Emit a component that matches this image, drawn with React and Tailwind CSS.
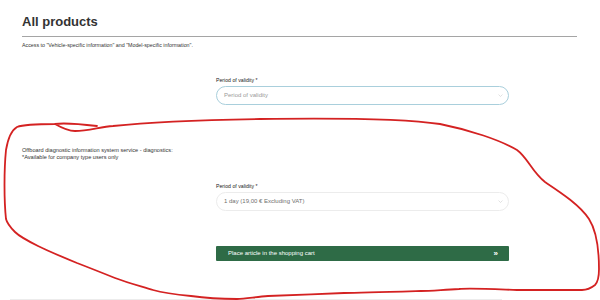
import React from 'react';

const font = { fontFamily: '"Liberation Sans", Arial, sans-serif' };

const Chevron = ({ className }) => (
  <svg viewBox="0 0 10 6" className={className} fill="none" stroke="currentColor" strokeWidth="1">
    <path d="M1 1 L5 5 L9 1" />
  </svg>
);

const Field = ({ label, value, placeholder, active }) => (
  <div className="flex flex-col">
    <label className="text-[5.2px] leading-[6px] text-[#222]">{label}</label>
    <div
      className={`mt-[3px] h-[19px] rounded-full border bg-white flex items-center justify-between pl-[7px] pr-[5px] ${
        active ? 'border-[#a9cfdc]' : 'border-[#ececec]'
      }`}
    >
      <span className={`text-[6px] ${placeholder ? 'text-[#9a9a9a]' : 'text-[#6f6f6f]'}`}>{value}</span>
      <Chevron className="w-[5px] h-[3px] text-[#c4c4c4]" />
    </div>
  </div>
);

export default function App() {
  return (
    <div className="relative w-[600px] h-[300px] bg-white overflow-hidden" style={font}>
      <div className="pl-[22px] pr-[23px] pt-[15px]">
        {/* Header */}
        <h1 className="text-[13px] leading-none font-bold text-[#333]">All products</h1>
        <div className="mt-[8px] h-px bg-[#a5a5a5]" />
        <p className="mt-[5px] text-[5.3px] leading-[6px] text-[#333]">
          Access to "Vehicle-specific information" and "Model-specific information".
        </p>

        {/* First product */}
        <div className="ml-[194px] w-[293px] mt-[29px]">
          <Field label="Period of validity *" value="Period of validity" placeholder active />
        </div>

        {/* Second product */}
        <div className="mt-[42px] text-[5.6px] leading-[6.5px] text-[#333]">
          <p>Offboard diagnostic information system service - diagnostics:</p>
          <p>*Available for company type users only</p>
        </div>

        <div className="ml-[194px] w-[293px] mt-[23px]">
          <Field label="Period of validity *" value="1 day (19,00 € Excluding VAT)" />
          <button className="mt-[35px] w-full h-[15px] bg-[#2e6b46] rounded-[1px] flex items-center justify-between pl-[12px] pr-[11px] text-white text-[6px]">
            <span>Place article in the shopping cart</span>
            <span className="text-[8px] leading-none font-bold">»</span>
          </button>
        </div>
      </div>

      {/* Footer rule */}
      <div className="absolute left-[10px] w-[492px] top-[299px] h-px bg-[#ececec]" />

      {/* Red hand-drawn annotation */}
      <svg className="absolute inset-0 pointer-events-none" width="600" height="300" viewBox="0 0 600 300" fill="none">
        <path
          d="M97 126 C80 124 62 123 55 124 C62 128 68 131 75 131 C88 131 100 127 113 126 C150 122 200 120 260 119 C330 118 400 118 440 124 C470 130 500 140 517 150 C528 158 532 172 545 182 C560 192 580 205 589 219 C596 230 599 250 599 269 C599 278 598 282 595 285 C590 289 586 290 582 290 C560 290 540 290 517 290 C490 289 470 288 459 289 C440 290 430 291 421 291 C390 292 360 293 344 293 C320 294 290 295 268 296 C255 297 245 299 237 299 C220 299 205 298 191 296 C170 294 160 292 153 290 C140 286 128 283 115 278 C100 272 90 268 77 263 C60 256 48 251 38 246 C28 241 20 237 15 232 C10 227 7 223 6 219 C4 200 4 170 6 150 C8 138 12 130 17 127 C22 125 35 124 55 124"
          stroke="#d42222"
          strokeWidth="1.8"
          strokeLinecap="round"
          strokeLinejoin="round"
        />
      </svg>
    </div>
  );
}
